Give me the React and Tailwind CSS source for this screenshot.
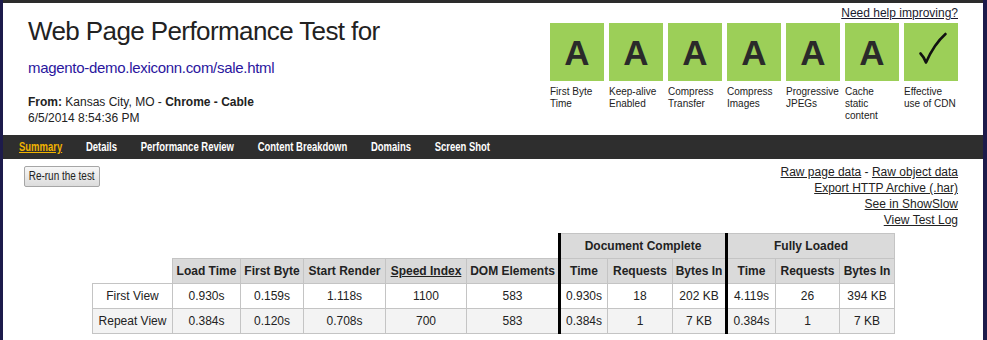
import React from 'react'

const grades = [
    { grade: 'A', label: ['First Byte', 'Time'] },
    { grade: 'A', label: ['Keep-alive', 'Enabled'] },
    { grade: 'A', label: ['Compress', 'Transfer'] },
    { grade: 'A', label: ['Compress', 'Images'] },
    { grade: 'A', label: ['Progressive', 'JPEGs'] },
    { grade: 'A', label: ['Cache', 'static', 'content'] },
    { grade: 'check', label: ['Effective', 'use of CDN'] },
];

const tabs = ['Summary', 'Details', 'Performance Review', 'Content Breakdown', 'Domains', 'Screen Shot'];

const rows = [
    { name: 'First View', values: ['0.930s', '0.159s', '1.118s', '1100', '583', '0.930s', '18', '202 KB', '4.119s', '26', '394 KB'], bg: 'bg-white' },
    { name: 'Repeat View', values: ['0.384s', '0.120s', '0.708s', '700', '583', '0.384s', '1', '7 KB', '0.384s', '1', '7 KB'], bg: 'bg-[#f3f3f3]' },
];

const colWidths = [80, 68, 63, 82, 81, 93, 48, 65, 54, 49, 64, 55];

function Check() {
    return (
        <svg width="54" height="58" viewBox="0 0 54 58">
            <path d="M16.5 30.5 C18.5 32.5 20.5 35.5 22 39.5 C27 28 33 18.5 41.5 11" fill="none" stroke="#111" strokeWidth="2.6" strokeLinecap="round" strokeLinejoin="round" />
        </svg>
    );
}

export default function App() {
    const cell = 'h-[25px] border border-[#c4c4c4] text-center p-0';
    const thick = 'border-l-[3px] border-l-black';

    return (
        <div className="w-[987px] h-[340px] overflow-hidden bg-[#1d1b4b] pl-[3px] pr-[4px] font-['Liberation_Sans',Arial,sans-serif] text-[#222]">
            <div className="h-full bg-white border-t-[3px] border-[#2c2c2c]">
                {/* Header */}
                <div className="h-[132px] flex justify-between">
                    <div className="pl-[25px] pt-[12px]">
                        <h1 className="text-[26px] leading-[32px] tracking-[-0.6px] text-[#222]">Web Page Performance Test for</h1>
                        <div className="mt-[11px] text-[15px] leading-[20px] tracking-[-0.3px] text-[#2a169e]">magento-demo.lexiconn.com/sale.html</div>
                        <div className="mt-[16px] text-[12px] leading-[16px]">
                            <div><b>From:</b> Kansas City, MO - <b>Chrome - Cable</b></div>
                            <div>6/5/2014 8:54:36 PM</div>
                        </div>
                    </div>
                    <div className="w-[408px] mr-[25px] pt-[3px]">
                        <div className="text-right text-[12px] leading-[14px]">
                            <a className="underline text-[#1a1a2e]">Need help improving?</a>
                        </div>
                        <div className="mt-[3px] flex gap-[5px]">
                            {grades.map((g, i) => (
                                <div key={i} className="w-[54px]">
                                    <div className="h-[58px] bg-[#9ccf58] flex items-center justify-center">
                                        {g.grade === 'check'
                                            ? <Check />
                                            : <span className="text-[35px] font-bold leading-none text-[#2a2a2a]">{g.grade}</span>}
                                    </div>
                                    <div className="mt-[5px] text-[10px] leading-[12px] whitespace-nowrap">
                                        {g.label.map((l) => <div key={l}>{l}</div>)}
                                    </div>
                                </div>
                            ))}
                        </div>
                    </div>
                </div>

                {/* Nav */}
                <div className="h-[24px] bg-[#2e2e2e] flex items-center pl-[16px] text-[12px] font-bold">
                    <div className="flex gap-[30px] origin-left scale-x-[0.79] whitespace-nowrap">
                        {tabs.map((t, i) => (
                            <a key={t} className={i === 0 ? 'text-[#f2b300] underline' : 'text-white'}>{t}</a>
                        ))}
                    </div>
                </div>

                {/* Actions */}
                <div className="flex justify-between items-start pt-[5px]">
                    <button className="ml-[21px] mt-[2px] w-[76px] h-[21px] border border-[#a6a6a6] rounded-[2px] bg-gradient-to-b from-[#f7f7f7] to-[#dcdcdc] text-[12px] leading-[19px] text-[#222] flex items-center justify-center">
                        <span className="inline-block scale-x-[0.83] whitespace-nowrap">Re-run the test</span>
                    </button>
                    <div className="pr-[25px] text-right text-[12px] leading-[16px]">
                        <div><a className="underline">Raw page data</a> - <a className="underline">Raw object data</a></div>
                        <div><a className="underline">Export HTTP Archive (.har)</a></div>
                        <div><a className="underline">See in ShowSlow</a></div>
                        <div><a className="underline">View Test Log</a></div>
                    </div>
                </div>

                {/* Results table */}
                <table className="ml-[89px] mt-[5px] w-[802px] table-fixed border-collapse text-[12px]">
                    <colgroup>
                        {colWidths.map((w, i) => <col key={i} style={{ width: w }} />)}
                    </colgroup>
                    <thead>
                        <tr>
                            <th colSpan={6} className="h-[25px] p-0"></th>
                            <th colSpan={3} className={`${cell} ${thick} bg-[#dadada] font-bold`}>Document Complete</th>
                            <th colSpan={3} className={`${cell} ${thick} bg-[#dadada] font-bold`}>Fully Loaded</th>
                        </tr>
                        <tr>
                            <th className="h-[25px] p-0"></th>
                            <th className={`${cell} bg-[#dadada] font-bold`}>Load Time</th>
                            <th className={`${cell} bg-[#dadada] font-bold`}>First Byte</th>
                            <th className={`${cell} bg-[#dadada] font-bold`}>Start Render</th>
                            <th className={`${cell} bg-[#dadada] font-bold`}><span className="underline">Speed Index</span></th>
                            <th className={`${cell} bg-[#dadada] font-bold whitespace-nowrap`}>DOM Elements</th>
                            <th className={`${cell} ${thick} bg-[#dadada] font-bold`}>Time</th>
                            <th className={`${cell} bg-[#dadada] font-bold`}>Requests</th>
                            <th className={`${cell} bg-[#dadada] font-bold`}>Bytes In</th>
                            <th className={`${cell} ${thick} bg-[#dadada] font-bold`}>Time</th>
                            <th className={`${cell} bg-[#dadada] font-bold`}>Requests</th>
                            <th className={`${cell} bg-[#dadada] font-bold`}>Bytes In</th>
                        </tr>
                    </thead>
                    <tbody>
                        {rows.map((r) => (
                            <tr key={r.name} className={r.bg}>
                                <td className={`${cell} whitespace-nowrap`}>{r.name}</td>
                                {r.values.map((v, i) => (
                                    <td key={i} className={`${cell} ${i === 5 || i === 8 ? thick : ''}`}>{v}</td>
                                ))}
                            </tr>
                        ))}
                    </tbody>
                </table>
            </div>
        </div>
    )
}
